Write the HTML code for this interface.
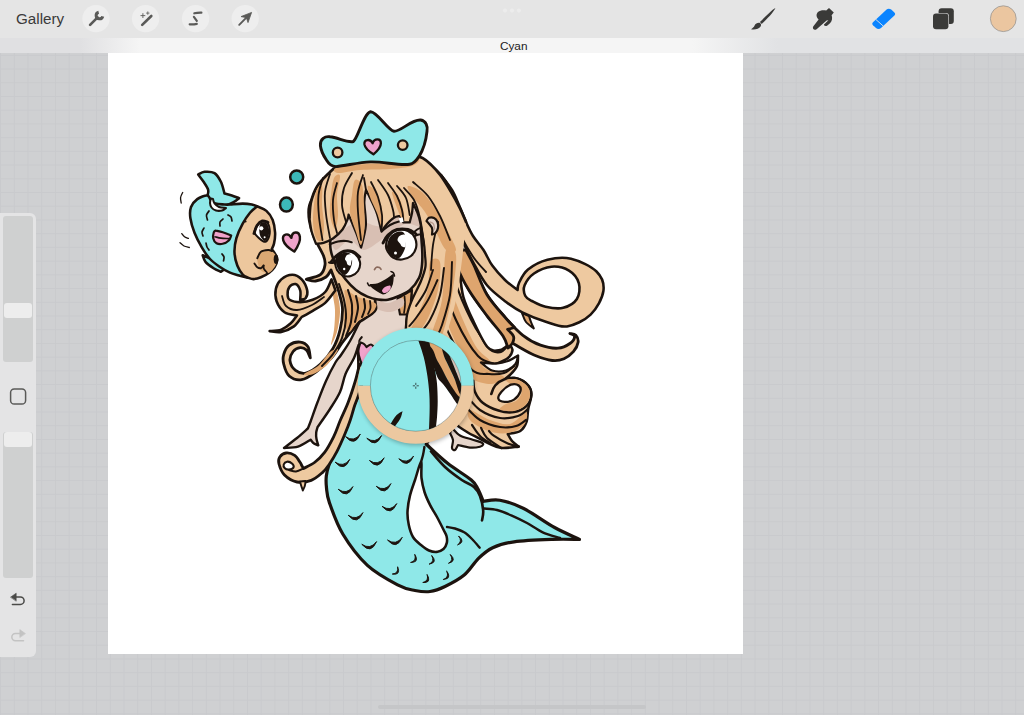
<!DOCTYPE html>
<html lang="en">
<head>
<meta charset="utf-8">
<title>Procreate – Cyan</title>
<style>
html,body{margin:0;padding:0;}
body{width:1024px;height:715px;overflow:hidden;position:relative;background:#cfd0d2;font-family:"Liberation Sans",sans-serif;}
#grid{position:absolute;left:0;top:0;width:1024px;height:715px;
 background-image:linear-gradient(to right,#c9cacd 1.1px,transparent 1.1px),linear-gradient(to bottom,#c9cacd 1.1px,transparent 1.1px);
 background-size:13.722px 13.733px;background-position:0.06px -0.05px;}
#topbar{position:absolute;left:0;top:0;width:1024px;height:38px;background:#e5e5e5;}
#strip{position:absolute;left:0;top:38px;width:1024px;height:15px;
 background:linear-gradient(to right,#e0e0e2 0,#e0e0e2 80px,#f5f5f5 140px,#f5f5f5 692px,#e1e2e4 778px,#e1e2e4 1024px);}
#title{position:absolute;left:1.7px;top:38.7px;width:1024px;height:15px;line-height:15px;text-align:center;font-size:11.8px;color:#222;}
#gallery{position:absolute;left:16px;top:9px;font-size:15.2px;line-height:20px;color:#3a3a3a;}
#canvas{position:absolute;left:108.2px;top:52.8px;width:634.4px;height:601.4px;background:#fff;}
#sidebar{position:absolute;left:-8px;top:212.5px;width:44px;height:444.5px;background:#e4e4e5;border-radius:6px;}
.slider{position:absolute;left:3px;width:29.7px;background:#cfd0d0;border-radius:3px;}
.knob{position:absolute;left:3.6px;width:28.6px;height:14.5px;background:#ededed;border-radius:3px;}
#art{position:absolute;left:0;top:0;}
#icons{position:absolute;left:0;top:0;}
#homebar{position:absolute;left:378px;top:705px;width:268px;height:4px;border-radius:2px;background:#c5c6c8;}
</style>
</head>
<body>
<div id="grid"></div>
<div id="canvas"></div>
<svg id="art" width="1024" height="715" viewBox="0 0 1024 715">
<g id="hair-back">
<path d="M419.0 157.0 C422.7 160.0 435.0 167.8 441.0 175.0 C447.0 182.2 451.5 189.2 455.0 200.0 C458.5 210.8 461.2 227.8 462.0 240.0 C462.8 252.2 460.3 267.9 460.0 273.5 C460.6 277.4 461.3 289.2 463.5 297.0 C465.7 304.8 469.0 311.7 473.0 320.0 C477.0 328.3 483.1 341.7 487.6 347.0 C492.1 352.3 496.4 352.5 500.0 352.0 C503.6 351.5 507.5 345.3 509.0 344.0 C509.6 345.0 512.7 347.7 512.5 350.0 C512.3 352.3 510.8 355.7 508.0 358.0 C505.2 360.3 498.0 363.0 496.0 364.0 C498.0 363.7 504.3 363.3 508.0 362.0 C511.7 360.7 516.3 357.0 518.0 356.0 C517.8 357.7 518.3 362.8 517.0 366.0 C515.7 369.2 512.1 372.8 510.0 375.0 C507.9 377.2 505.5 378.5 504.6 379.2 C506.7 379.1 513.3 377.3 517.2 378.4 C521.1 379.4 525.9 382.7 528.2 385.5 C530.6 388.3 531.3 391.1 531.3 395.0 C531.3 398.9 529.0 404.6 528.2 409.0 C527.4 413.4 527.9 417.8 526.6 421.5 C525.3 425.2 523.4 428.9 520.3 431.0 C517.2 433.1 509.9 433.5 507.8 434.0 C508.5 435.2 510.2 438.9 512.0 441.0 C513.8 443.1 517.6 445.7 518.7 446.6 C515.8 446.8 506.4 448.5 501.5 448.0 C496.6 447.5 492.9 445.2 489.0 443.5 C485.1 441.8 481.7 439.7 478.0 437.8 C474.3 435.9 470.8 434.5 467.0 432.0 C463.2 429.5 458.7 427.5 455.0 423.0 C451.3 418.5 449.2 415.5 445.0 405.0 C440.8 394.5 435.0 374.2 430.0 360.0 C425.0 345.8 418.3 333.3 415.0 320.0 C411.7 306.7 411.7 296.7 410.0 280.0 C408.3 263.3 406.7 236.7 405.0 220.0 C403.3 203.3 400.8 186.7 400.0 180.0Z" fill="#eec9a0" stroke="#1c130e" stroke-width="2.56" stroke-linejoin="round" stroke-linecap="round" />
<path d="M428.0 205.0 C430.0 205.8 435.5 234.2 440.0 250.0 C444.5 265.8 449.2 284.2 455.0 300.0 C460.8 315.8 469.2 334.7 475.0 345.0 C480.8 355.3 490.8 358.7 490.0 362.0 C489.2 365.3 476.7 370.3 470.0 365.0 C463.3 359.7 455.7 342.5 450.0 330.0 C444.3 317.5 439.7 304.2 436.0 290.0 C432.3 275.8 429.3 259.2 428.0 245.0 C426.7 230.8 426.0 204.2 428.0 205.0Z" fill="#dea56e" stroke="none" stroke-width="2.56" stroke-linejoin="round" stroke-linecap="round" />
<path d="M471.0 360.0 C474.7 360.0 482.4 367.1 488.0 370.0 C493.6 372.9 503.9 375.3 504.6 377.6 C505.3 379.9 497.1 383.6 492.0 384.0 C486.9 384.4 478.3 382.3 474.0 380.0 C469.7 377.7 466.5 373.3 466.0 370.0 C465.5 366.7 467.3 360.0 471.0 360.0Z" fill="#dea56e" stroke="none" stroke-width="2.56" stroke-linejoin="round" stroke-linecap="round" />
<path d="M470.0 410.0 C473.3 410.0 483.3 417.7 490.0 420.0 C496.7 422.3 504.0 425.3 510.0 424.0 C516.0 422.7 523.7 411.8 526.0 412.0 C528.3 412.2 527.0 421.5 524.0 425.0 C521.0 428.5 514.0 432.0 508.0 433.0 C502.0 434.0 494.3 433.2 488.0 431.0 C481.7 428.8 473.0 423.5 470.0 420.0 C467.0 416.5 466.7 410.0 470.0 410.0Z" fill="#dea56e" stroke="none" stroke-width="2.56" stroke-linejoin="round" stroke-linecap="round" />
<path d="M438.0 215.0 C439.7 222.5 444.0 245.8 448.0 260.0 C452.0 274.2 456.7 287.5 462.0 300.0 C467.3 312.5 474.2 326.3 480.0 335.0 C485.8 343.7 494.2 349.2 497.0 352.0" fill="none" stroke="#1c130e" stroke-width="2.16" stroke-linejoin="round" stroke-linecap="round" />
<path d="M430.0 225.0 C431.7 233.3 435.7 259.2 440.0 275.0 C444.3 290.8 449.7 306.5 456.0 320.0 C462.3 333.5 471.3 348.7 478.0 356.0 C484.7 363.3 493.0 362.7 496.0 364.0" fill="none" stroke="#1c130e" stroke-width="2.16" stroke-linejoin="round" stroke-linecap="round" />
<path d="M426.0 250.0 C427.7 258.3 431.7 285.0 436.0 300.0 C440.3 315.0 446.0 328.3 452.0 340.0 C458.0 351.7 465.8 364.3 472.0 370.0 C478.2 375.7 483.7 373.5 489.0 374.0 C494.3 374.5 499.8 374.3 504.0 373.0 C508.2 371.7 512.3 367.2 514.0 366.0" fill="none" stroke="#1c130e" stroke-width="2.16" stroke-linejoin="round" stroke-linecap="round" />
<path d="M446.0 190.0 C447.7 195.8 453.5 213.3 456.0 225.0 C458.5 236.7 460.2 254.2 461.0 260.0" fill="none" stroke="#1c130e" stroke-width="2.16" stroke-linejoin="round" stroke-linecap="round" />
<path d="M473.3 380.8 C473.6 382.6 473.3 388.1 474.9 391.7 C476.5 395.3 478.8 399.6 482.7 402.7 C486.6 405.8 493.2 408.9 498.4 410.5 C503.6 412.1 509.3 412.8 514.0 412.0 C518.7 411.2 523.7 408.6 526.6 405.8 C529.5 403.0 531.0 398.4 531.3 395.0 C531.6 391.6 530.6 388.3 528.2 385.5 C525.9 382.7 521.1 379.4 517.2 378.4 C513.3 377.3 508.3 378.0 504.6 379.2 C500.9 380.4 497.4 383.0 495.2 385.5 C493.0 388.0 491.9 392.6 491.3 394.0" fill="#eec9a0" stroke="#1c130e" stroke-width="2.56" stroke-linejoin="round" stroke-linecap="round" />
<path d="M506.0 380.0 C507.0 379.2 513.7 378.4 517.2 379.4 C520.7 380.4 524.9 383.4 527.0 386.0 C529.1 388.6 530.2 391.8 530.0 395.0 C529.8 398.2 528.3 402.3 525.6 405.0 C522.9 407.7 518.3 410.2 514.0 411.0 C509.7 411.8 501.3 410.7 500.0 409.5 C498.7 408.3 503.3 405.4 506.0 404.0 C508.7 402.6 513.4 402.8 516.0 401.0 C518.6 399.2 521.0 395.6 521.5 393.0 C522.0 390.4 520.8 387.0 519.0 385.5 C517.2 384.0 513.2 384.9 511.0 384.0 C508.8 383.1 505.0 380.8 506.0 380.0Z" fill="#dea56e" stroke="none" stroke-width="2.56" stroke-linejoin="round" stroke-linecap="round" />
<path d="M498.4 398.8 C497.9 397.1 499.4 394.1 501.5 391.7 C503.6 389.3 508.0 385.7 510.9 384.7 C513.8 383.7 517.1 384.3 518.7 385.5 C520.3 386.7 521.1 389.3 520.3 391.7 C519.5 394.1 516.6 397.9 514.0 399.6 C511.4 401.3 507.2 402.0 504.6 401.9 C502.0 401.8 498.9 400.5 498.4 398.8Z" fill="#fff" stroke="#1c130e" stroke-width="2.3" stroke-linejoin="round" stroke-linecap="round" />
<path d="M466.0 395.0 C468.3 397.5 474.3 406.2 480.0 410.0 C485.7 413.8 493.7 417.0 500.0 418.0 C506.3 419.0 513.3 417.5 518.0 416.0 C522.7 414.5 526.3 410.2 528.0 409.0" fill="none" stroke="#1c130e" stroke-width="2.16" stroke-linejoin="round" stroke-linecap="round" />
<path d="M464.0 405.0 C466.7 407.5 474.0 416.3 480.0 420.0 C486.0 423.7 494.0 426.0 500.0 427.0 C506.0 428.0 511.7 427.2 516.0 426.0 C520.3 424.8 524.3 421.0 526.0 420.0" fill="none" stroke="#1c130e" stroke-width="2.16" stroke-linejoin="round" stroke-linecap="round" />
<path d="M472.0 425.0 C473.3 426.8 477.0 433.0 480.0 436.0 C483.0 439.0 488.3 441.8 490.0 443.0" fill="none" stroke="#1c130e" stroke-width="2.16" stroke-linejoin="round" stroke-linecap="round" />
<path d="M481.0 427.8 C482.0 429.5 483.6 434.6 487.0 438.0 C490.4 441.4 499.1 446.3 501.5 448.0" fill="none" stroke="#1c130e" stroke-width="2.16" stroke-linejoin="round" stroke-linecap="round" />
<path d="M489.0 431.0 C489.8 431.8 490.6 433.5 493.7 435.6 C496.8 437.7 503.6 441.6 507.8 443.4 C512.0 445.2 516.9 446.1 518.7 446.6" fill="none" stroke="#1c130e" stroke-width="2.16" stroke-linejoin="round" stroke-linecap="round" />
<path d="M481.0 362.5 C483.5 362.7 491.5 363.8 496.0 363.5 C500.5 363.2 504.3 362.3 508.0 361.0 C511.7 359.7 516.3 356.4 518.0 355.5 C517.6 356.9 517.5 361.5 515.5 364.0 C513.5 366.5 509.9 369.4 506.0 370.5 C502.1 371.6 496.2 371.8 492.0 370.5 C487.8 369.2 482.8 363.8 481.0 362.5Z" fill="#fff" stroke="#1c130e" stroke-width="2.3" stroke-linejoin="round" stroke-linecap="round" />
<path d="M460.0 273.5 C460.6 277.4 461.3 289.2 463.5 297.0 C465.7 304.8 469.0 311.7 473.0 320.0 C477.0 328.3 483.1 342.0 487.6 347.0 C492.1 352.0 496.4 350.5 500.0 350.0 C503.6 349.5 507.5 345.0 509.0 344.0 C508.3 342.7 508.7 340.7 505.0 336.0 C501.3 331.3 492.9 323.3 487.0 315.8 C481.1 308.3 473.9 298.1 469.4 291.0 C464.9 283.9 461.6 276.4 460.0 273.5Z" fill="#fff" stroke="#1c130e" stroke-width="2.3" stroke-linejoin="round" stroke-linecap="round" />
<path d="M470.0 262.0 C472.8 267.4 481.1 285.4 487.0 294.7 C492.9 304.0 499.3 310.8 505.3 317.6 C511.3 324.4 517.0 330.7 522.9 335.3 C528.8 339.9 534.6 343.1 540.5 345.2 C546.4 347.3 553.1 348.5 558.0 348.2 C562.9 347.9 567.1 345.5 569.9 343.5 C572.7 341.5 574.6 338.1 574.6 336.4 C574.6 334.7 570.7 334.0 569.9 333.5 C570.9 333.8 574.4 333.8 575.8 335.3 C577.2 336.8 578.5 339.6 578.1 342.3 C577.7 345.0 575.8 348.9 573.4 351.7 C571.0 354.4 567.5 357.3 564.0 358.8 C560.5 360.3 557.2 361.1 552.3 360.5 C547.4 359.9 540.5 357.6 534.6 355.2 C528.7 352.8 521.4 348.3 517.0 345.8 C512.6 343.3 509.5 341.0 508.0 340.0 C505.0 335.8 496.3 324.2 490.0 315.0 C483.7 305.8 473.3 290.0 470.0 285.0Z" fill="#eec9a0" stroke="#1c130e" stroke-width="2.82" stroke-linejoin="round" stroke-linecap="round" />
<path d="M455.3 250.0 C455.7 252.9 455.2 260.8 457.6 267.6 C460.0 274.4 464.5 283.0 469.4 291.0 C474.3 299.0 481.4 308.3 487.0 315.8 C492.6 323.3 499.5 330.6 503.0 336.0 C506.5 341.4 507.2 346.0 508.0 348.0 C508.8 347.2 511.6 344.9 512.5 343.0 C513.4 341.1 514.3 338.7 513.5 336.4 C512.7 334.1 508.6 330.6 507.6 329.4 C508.8 329.1 513.4 327.8 514.5 327.5 C513.0 325.9 509.9 323.1 505.3 317.6 C500.7 312.1 492.2 303.4 487.0 294.7 C481.8 286.0 477.5 272.8 474.0 265.3 C470.5 257.9 467.2 252.6 465.9 250.0Z" fill="#dea56e" stroke="#1c130e" stroke-width="2.82" stroke-linejoin="round" stroke-linecap="round" />
<path d="M522.0 313.0 C522.7 314.5 524.0 319.4 526.0 322.0 C528.0 324.6 532.5 327.3 533.8 328.4 C533.3 327.3 531.8 324.1 531.0 322.0 C530.2 319.9 529.3 317.0 529.0 316.0Z" fill="#dea56e" stroke="#1c130e" stroke-width="2.05" stroke-linejoin="round" stroke-linecap="round" />
<path d="M441.0 175.0 C442.8 177.5 449.0 185.0 452.0 190.0 C455.0 195.0 456.7 199.7 459.0 205.0 C461.3 210.3 463.7 216.8 466.0 222.0 C468.3 227.2 470.1 231.3 473.0 236.0 C475.9 240.7 480.3 245.1 483.5 250.0 C486.7 254.9 488.7 260.6 492.3 265.6 C495.9 270.6 500.8 275.9 505.0 280.0 C509.2 284.1 515.5 288.3 517.6 290.0 C517.8 288.8 517.3 286.4 519.0 283.0 C520.7 279.6 523.2 273.5 528.0 269.6 C532.8 265.7 540.3 261.6 547.5 259.8 C554.7 258.0 562.8 256.9 571.0 258.8 C579.2 260.8 591.1 266.1 596.5 271.5 C601.9 276.9 604.4 283.8 603.4 291.0 C602.4 298.2 596.7 308.7 590.6 314.6 C584.5 320.5 574.5 325.2 567.0 326.4 C559.5 327.6 553.2 324.0 545.8 321.7 C538.3 319.4 529.0 315.6 522.3 312.3 C515.6 309.0 511.7 306.2 505.8 301.7 C499.9 297.2 492.5 291.9 487.0 285.3 C481.5 278.7 477.1 269.4 472.9 261.8 C468.7 254.2 465.8 247.8 462.0 240.0 C458.2 232.2 452.0 219.2 450.0 215.0Z" fill="#eec9a0" stroke="#1c130e" stroke-width="2.56" stroke-linejoin="round" stroke-linecap="round" />
<path d="M525.2 295.8 C524.0 293.2 523.1 289.0 524.6 285.3 C526.1 281.6 529.5 276.6 534.0 273.5 C538.5 270.4 545.6 267.2 551.4 266.7 C557.2 266.2 564.4 267.8 569.0 270.6 C573.6 273.4 577.6 278.6 578.9 283.3 C580.2 288.0 579.5 294.9 576.9 299.0 C574.3 303.1 568.4 306.5 563.2 307.8 C558.0 309.1 550.8 307.9 545.6 306.8 C540.4 305.7 535.4 302.8 532.0 301.0 C528.6 299.2 526.4 298.4 525.2 295.8Z" fill="#fff" stroke="#1c130e" stroke-width="2.56" stroke-linejoin="round" stroke-linecap="round" />
<path d="M444.0 195.0 C445.3 198.3 449.0 207.8 452.0 215.0 C455.0 222.2 458.3 230.8 462.0 238.0 C465.7 245.2 470.0 252.3 474.0 258.0 C478.0 263.7 484.0 269.7 486.0 272.0" fill="none" stroke="#1c130e" stroke-width="1.92" stroke-linejoin="round" stroke-linecap="round" />
</g>
<g id="tail">
<path d="M364.0 374.0 C363.3 376.7 362.0 384.0 360.0 390.0 C358.0 396.0 354.5 403.7 352.0 410.0 C349.5 416.3 347.7 421.7 345.0 428.0 C342.3 434.3 338.7 441.9 336.0 448.0 C333.3 454.1 330.6 460.0 329.0 464.7 C327.4 469.4 326.7 472.1 326.3 476.0 C325.9 479.9 326.0 483.6 326.5 488.0 C327.0 492.4 326.7 494.9 329.4 502.6 C332.1 510.3 336.5 523.5 342.8 534.0 C349.1 544.5 358.1 556.7 367.4 565.3 C376.7 573.9 390.8 581.2 398.7 585.4 C406.6 589.6 409.8 589.5 415.0 590.5 C420.2 591.5 425.0 592.2 430.0 591.5 C435.0 590.8 439.3 589.2 445.0 586.5 C450.7 583.8 458.6 579.8 464.2 575.1 C469.8 570.4 473.8 563.0 478.5 558.4 C483.2 553.8 486.8 550.5 492.7 547.7 C498.6 544.9 504.2 543.2 514.1 541.8 C524.0 540.4 541.3 539.8 552.2 539.4 C563.1 539.0 575.0 539.4 579.5 539.4 C575.4 537.4 563.9 532.6 554.6 527.5 C545.3 522.4 532.8 513.0 523.7 508.5 C514.6 503.9 506.6 501.4 499.9 500.2 C493.1 499.0 486.0 501.1 483.2 501.3 C482.3 499.2 480.0 492.6 478.0 489.0 C476.0 485.4 476.4 484.3 471.3 480.0 C466.2 475.7 455.1 469.2 447.6 463.3 C440.1 457.4 429.8 447.5 426.2 444.3 C428.5 440.2 436.7 428.2 440.0 420.0 C443.3 411.8 446.0 402.7 446.0 395.0 C446.0 387.3 441.0 377.5 440.0 374.0Z" fill="#8fe8e8" stroke="#1c130e" stroke-width="3.2" stroke-linejoin="round" stroke-linecap="round" />
<path d="M421.0 462.0 C419.9 462.3 416.9 474.4 415.0 480.0 C413.1 485.6 411.1 490.6 409.9 495.9 C408.6 501.2 407.7 507.1 407.5 512.0 C407.3 516.9 407.9 520.8 408.8 525.0 C409.7 529.2 411.0 533.7 413.0 537.0 C415.0 540.3 418.3 542.8 421.0 545.0 C423.7 547.2 426.4 549.4 429.0 550.5 C431.6 551.6 434.3 552.1 436.7 551.9 C439.1 551.6 441.8 550.5 443.5 549.0 C445.2 547.5 446.3 545.1 446.8 542.9 C447.3 540.7 447.1 538.2 446.5 536.0 C445.9 533.8 445.0 532.7 443.4 529.5 C441.8 526.3 439.2 521.1 437.0 517.0 C434.8 512.9 432.1 509.1 430.0 504.9 C427.9 500.7 425.9 496.5 424.5 492.0 C423.1 487.5 422.1 483.0 421.5 478.0 C420.9 473.0 422.1 461.7 421.0 462.0Z" fill="#fff" stroke="#1c130e" stroke-width="2.56" stroke-linejoin="round" stroke-linecap="round" />
<path d="M424.4 447.0 C424.2 448.3 423.6 452.5 423.0 455.0 C422.4 457.5 421.3 460.8 421.0 462.0" fill="none" stroke="#1c130e" stroke-width="2.4" stroke-linejoin="round" stroke-linecap="round" />
<path d="M431.0 451.4 C433.3 454.0 439.9 462.2 445.0 467.0 C450.1 471.8 457.0 476.7 461.8 480.0 C466.6 483.3 471.0 484.3 474.0 487.0 C477.0 489.7 478.5 492.0 480.0 496.0 C481.5 500.0 482.9 506.8 483.2 510.9 C483.5 515.0 482.2 518.8 482.0 520.4" fill="none" stroke="#1c130e" stroke-width="2.64" stroke-linejoin="round" stroke-linecap="round" />
<path d="M484.0 508.5 C486.2 508.8 492.4 508.8 497.0 510.0 C501.6 511.2 506.8 513.4 511.8 515.6 C516.8 517.8 521.9 520.2 527.0 523.0 C532.1 525.8 537.2 529.8 542.7 532.3 C548.2 534.8 557.1 537.0 560.0 538.0" fill="none" stroke="#1c130e" stroke-width="2.4" stroke-linejoin="round" stroke-linecap="round" />
<path d="M447.0 527.0 C448.3 527.2 452.1 527.6 455.0 528.5 C457.9 529.4 461.4 530.5 464.2 532.3 C467.0 534.0 469.4 536.4 472.0 539.0 C474.6 541.6 478.4 546.2 479.7 547.7" fill="none" stroke="#1c130e" stroke-width="2.4" stroke-linejoin="round" stroke-linecap="round" />
<path d="M345.9 435.6 Q353.4 447.3 360.9 435.0 Q353.4 442.6 345.9 435.6 Z" transform="rotate(-8 353.4 438.2)" fill="#1c130e" stroke="#1c130e" stroke-width="0.9" stroke-linejoin="round"/>
<path d="M367.1 437.2 Q374.6 448.9 382.1 436.6 Q374.6 444.2 367.1 437.2 Z" transform="rotate(-8 374.6 439.8)" fill="#1c130e" stroke="#1c130e" stroke-width="0.9" stroke-linejoin="round"/>
<path d="M335.3 461.0 Q342.8 472.7 350.3 460.4 Q342.8 468.0 335.3 461.0 Z" transform="rotate(-8 342.8 463.6)" fill="#1c130e" stroke="#1c130e" stroke-width="0.9" stroke-linejoin="round"/>
<path d="M369.7 459.4 Q377.2 471.1 384.7 458.8 Q377.2 466.4 369.7 459.4 Z" transform="rotate(-8 377.2 462.0)" fill="#1c130e" stroke="#1c130e" stroke-width="0.9" stroke-linejoin="round"/>
<path d="M399.1 457.7 Q406.6 469.4 414.1 457.1 Q406.6 464.7 399.1 457.7 Z" transform="rotate(-8 406.6 460.3)" fill="#1c130e" stroke="#1c130e" stroke-width="0.9" stroke-linejoin="round"/>
<path d="M338.5 488.2 Q346.0 499.9 353.5 487.6 Q346.0 495.2 338.5 488.2 Z" transform="rotate(-8 346.0 490.8)" fill="#1c130e" stroke="#1c130e" stroke-width="0.9" stroke-linejoin="round"/>
<path d="M376.5 485.2 Q384.0 496.9 391.5 484.6 Q384.0 492.2 376.5 485.2 Z" transform="rotate(-8 384.0 487.8)" fill="#1c130e" stroke="#1c130e" stroke-width="0.9" stroke-linejoin="round"/>
<path d="M382.3 505.2 Q389.8 516.9 397.3 504.6 Q389.8 512.2 382.3 505.2 Z" transform="rotate(-8 389.8 507.8)" fill="#1c130e" stroke="#1c130e" stroke-width="0.9" stroke-linejoin="round"/>
<path d="M348.5 514.2 Q356.0 525.9 363.5 513.6 Q356.0 521.2 348.5 514.2 Z" transform="rotate(-8 356.0 516.8)" fill="#1c130e" stroke="#1c130e" stroke-width="0.9" stroke-linejoin="round"/>
<path d="M362.1 543.2 Q369.6 554.9 377.1 542.6 Q369.6 550.2 362.1 543.2 Z" transform="rotate(-8 369.6 545.8)" fill="#1c130e" stroke="#1c130e" stroke-width="0.9" stroke-linejoin="round"/>
<path d="M387.8 538.9 Q395.3 550.6 402.8 538.3 Q395.3 545.9 387.8 538.9 Z" transform="rotate(-8 395.3 541.5)" fill="#1c130e" stroke="#1c130e" stroke-width="0.9" stroke-linejoin="round"/>
<path d="M392.0 570.0 Q396.5 577.6 401.0 569.4 Q396.5 574.6 392.0 570.0 Z" transform="rotate(-50 396.5 571.7)" fill="#1c130e" stroke="#1c130e" stroke-width="0.9" stroke-linejoin="round"/>
<path d="M409.9 557.7 Q414.4 565.4 418.9 557.1 Q414.4 562.3 409.9 557.7 Z" transform="rotate(-60 414.4 559.4)" fill="#1c130e" stroke="#1c130e" stroke-width="0.9" stroke-linejoin="round"/>
<path d="M427.8 558.8 Q432.3 566.5 436.8 558.2 Q432.3 563.4 427.8 558.8 Z" transform="rotate(-70 432.3 560.5)" fill="#1c130e" stroke="#1c130e" stroke-width="0.9" stroke-linejoin="round"/>
<path d="M422.2 577.8 Q426.7 585.5 431.2 577.2 Q426.7 582.4 422.2 577.8 Z" transform="rotate(-60 426.7 579.5)" fill="#1c130e" stroke="#1c130e" stroke-width="0.9" stroke-linejoin="round"/>
<path d="M446.8 557.7 Q451.3 565.4 455.8 557.1 Q451.3 562.3 446.8 557.7 Z" transform="rotate(-75 451.3 559.4)" fill="#1c130e" stroke="#1c130e" stroke-width="0.9" stroke-linejoin="round"/>
<path d="M442.3 574.4 Q446.8 582.0 451.3 573.8 Q446.8 579.0 442.3 574.4 Z" transform="rotate(-65 446.8 576.1)" fill="#1c130e" stroke="#1c130e" stroke-width="0.9" stroke-linejoin="round"/>
<path d="M455.5 539.1 Q460.0 546.8 464.5 538.5 Q460.0 543.7 455.5 539.1 Z" transform="rotate(-80 460.0 540.8)" fill="#1c130e" stroke="#1c130e" stroke-width="0.9" stroke-linejoin="round"/>
</g>
<g id="body">
<path d="M452.0 428.0 C453.3 429.2 456.7 433.6 460.0 435.5 C463.3 437.4 468.5 438.4 472.0 439.5 C475.5 440.6 479.1 441.4 481.0 442.3 C482.9 443.2 483.4 443.9 483.2 444.6 C483.0 445.4 482.2 446.3 480.0 446.8 C477.8 447.3 473.7 447.9 470.0 447.6 C466.3 447.3 460.0 445.4 458.0 445.0 C457.5 445.8 456.0 449.5 455.0 450.0 C454.0 450.5 452.3 449.7 452.0 448.0 C451.7 446.3 453.3 442.5 453.0 440.0 C452.7 437.5 450.5 434.2 450.0 433.0Z" fill="#e6d5cb" stroke="#1c130e" stroke-width="2.18" stroke-linejoin="round" stroke-linecap="round" />
<path d="M374.0 296.0 C373.8 297.5 374.3 302.0 373.0 305.0 C371.7 308.0 368.2 311.2 366.0 314.0 C363.8 316.8 360.8 320.4 359.7 321.7 C359.2 323.9 356.9 330.3 356.5 335.0 C356.1 339.7 357.2 344.5 357.5 350.0 C357.8 355.5 358.1 362.5 358.0 368.0 C357.9 373.5 357.2 380.5 357.0 383.0 C364.2 383.3 386.8 385.5 400.0 385.0 C413.2 384.5 430.0 387.5 436.0 380.0 C442.0 372.5 436.0 346.7 436.0 340.0 C433.3 337.0 424.5 326.5 420.0 322.0 C415.5 317.5 411.6 315.9 408.8 313.0 C406.0 310.1 404.1 307.6 403.0 304.4 C401.9 301.2 402.2 295.7 402.0 294.0Z" fill="#e6d5cb" stroke="none" stroke-width="2.56" stroke-linejoin="round" stroke-linecap="round" />
<path d="M361.7 337.2 C361.2 338.0 359.1 339.9 358.5 342.0 C357.9 344.1 357.9 345.7 357.8 350.0 C357.8 354.3 358.3 362.5 358.2 368.0 C358.1 373.5 357.2 380.5 357.0 383.0" fill="none" stroke="#1c130e" stroke-width="2.16" stroke-linejoin="round" stroke-linecap="round" />
<path d="M407.5 314.5 C407.3 315.8 406.6 319.2 406.3 322.0 C406.0 324.8 405.9 329.5 405.8 331.0" fill="none" stroke="#1c130e" stroke-width="2.16" stroke-linejoin="round" stroke-linecap="round" />
<path d="M397.6 298.8 C398.7 298.1 401.6 296.2 404.0 294.7 C406.4 293.2 410.7 290.8 412.0 290.0 C411.8 291.7 411.2 297.2 411.0 300.0 C410.8 302.8 411.0 304.6 410.5 307.0 C410.0 309.4 408.6 313.2 408.2 314.5 C406.8 314.5 401.4 314.5 400.0 314.5 C399.8 313.1 398.9 308.6 398.5 306.0 C398.1 303.4 397.8 300.0 397.6 298.8Z" fill="#dea56e" stroke="#1c130e" stroke-width="2.18" stroke-linejoin="round" stroke-linecap="round" />
<path d="M404.5 296.0 C404.6 297.5 405.1 302.2 405.0 305.0 C404.9 307.8 404.2 311.7 404.0 313.0" fill="none" stroke="#1c130e" stroke-width="1.68" stroke-linejoin="round" stroke-linecap="round" />
<path d="M375.0 299.0 C377.0 298.2 383.5 303.2 388.0 303.0 C392.5 302.8 399.5 297.5 402.0 298.0 C404.5 298.5 405.0 303.7 403.0 306.0 C401.0 308.3 394.5 311.7 390.0 312.0 C385.5 312.3 378.5 310.2 376.0 308.0 C373.5 305.8 373.0 299.8 375.0 299.0Z" fill="#d8bfb3" stroke="none" stroke-width="2.56" stroke-linejoin="round" stroke-linecap="round" />
<path d="M360.5 342.5 C360.1 343.9 358.3 347.9 358.3 351.0 C358.3 354.1 359.4 358.0 360.5 361.0 C361.6 364.0 364.2 367.7 365.0 369.0 C366.5 367.8 370.8 364.8 374.0 362.0 C377.2 359.2 382.3 353.7 384.0 352.0 C383.3 350.9 381.6 346.2 380.0 345.5 C378.4 344.8 375.4 347.2 374.5 347.5 C373.9 347.0 372.3 344.6 371.0 344.5 C369.7 344.4 367.2 346.6 366.5 347.0 C366.1 346.5 365.0 344.8 364.0 344.0 C363.0 343.2 361.1 342.8 360.5 342.5Z" fill="#f1a3cb" stroke="#1c130e" stroke-width="2.18" stroke-linejoin="round" stroke-linecap="round" />
<path d="M359.7 321.7 C358.1 324.8 353.4 334.9 350.3 340.5 C347.2 346.1 343.4 351.4 341.0 355.0 C338.6 358.6 338.2 357.7 335.7 362.0 C333.2 366.3 329.0 374.3 326.0 381.0 C323.0 387.7 320.2 395.2 317.6 402.0 C315.0 408.8 312.2 417.1 310.6 421.5 C309.0 425.9 308.3 427.3 307.8 428.5 C306.0 430.1 301.0 434.8 297.0 438.0 C293.0 441.2 286.2 446.3 284.0 448.0 C286.3 447.8 293.6 448.1 298.0 446.7 C302.4 445.3 308.5 440.9 310.6 439.7 C311.2 440.3 312.7 442.6 314.0 443.5 C315.3 444.4 317.6 445.0 318.3 445.3 C318.0 444.2 316.9 441.1 316.5 439.0 C316.1 436.9 316.0 434.7 316.2 432.7 C316.4 430.7 317.4 427.9 317.6 427.0 C319.7 424.0 326.3 414.8 330.0 409.0 C333.7 403.2 337.4 397.8 340.0 392.0 C342.6 386.2 343.2 379.7 345.5 374.0 C347.8 368.3 351.9 362.7 354.0 358.0 C356.1 353.3 357.3 348.0 358.0 346.0Z" fill="#e6d5cb" stroke="none" stroke-width="2.56" stroke-linejoin="round" stroke-linecap="round" />
<path d="M359.7 321.7 C358.1 324.8 353.4 334.9 350.3 340.5 C347.2 346.1 343.4 351.4 341.0 355.0 C338.6 358.6 338.2 357.7 335.7 362.0 C333.2 366.3 329.0 374.3 326.0 381.0 C323.0 387.7 320.2 395.2 317.6 402.0 C315.0 408.8 312.2 417.1 310.6 421.5 C309.0 425.9 308.3 427.3 307.8 428.5 C306.0 430.1 301.0 434.8 297.0 438.0 C293.0 441.2 286.2 446.3 284.0 448.0 C286.3 447.8 293.6 448.1 298.0 446.7 C302.4 445.3 308.5 440.9 310.6 439.7 C311.2 440.3 312.7 442.6 314.0 443.5 C315.3 444.4 317.6 445.0 318.3 445.3 C318.0 444.2 316.9 441.1 316.5 439.0 C316.1 436.9 316.0 434.7 316.2 432.7 C316.4 430.7 317.4 427.9 317.6 427.0 C319.7 424.0 326.3 414.8 330.0 409.0 C333.7 403.2 337.4 397.8 340.0 392.0 C342.6 386.2 343.2 379.7 345.5 374.0 C347.8 368.3 351.8 362.8 354.0 358.0 C356.2 353.2 357.8 347.2 358.5 345.0" fill="none" stroke="#1c130e" stroke-width="2.4" stroke-linejoin="round" stroke-linecap="round" />
</g>
<g id="hair-left">
<path d="M359.5 364.0 C358.8 366.8 357.2 374.7 355.3 381.0 C353.4 387.3 350.9 395.3 348.3 402.0 C345.8 408.7 342.4 415.2 340.0 421.0 C337.6 426.8 336.2 431.6 333.6 436.8 C331.0 442.0 327.8 448.1 324.6 452.4 C321.4 456.7 318.0 459.8 314.5 462.5 C311.0 465.2 305.2 467.5 303.4 468.5 C303.1 467.9 302.0 466.0 301.5 465.0 C301.0 464.0 301.3 464.1 300.2 462.5 C299.1 460.9 297.1 457.0 294.7 455.4 C292.3 453.8 288.5 452.7 286.0 453.0 C283.5 453.3 281.0 455.2 279.8 457.0 C278.6 458.8 278.2 461.0 279.0 464.0 C279.8 467.0 281.5 472.0 284.5 475.0 C287.5 478.0 292.6 481.1 297.0 482.0 C301.4 482.9 307.0 482.0 311.2 480.4 C315.4 478.8 319.4 475.2 322.4 472.6 C325.4 470.0 326.6 468.2 329.0 464.7 C331.4 461.1 334.4 456.3 337.0 451.3 C339.6 446.3 342.5 439.7 344.7 434.5 C346.9 429.3 348.7 424.8 350.3 420.0 C351.9 415.2 353.0 410.7 354.5 406.0 C356.0 401.3 358.2 397.3 359.5 392.0 C360.8 386.7 361.8 378.3 362.3 374.0 C362.8 369.7 362.5 367.3 362.5 366.0Z" fill="#eec9a0" stroke="#1c130e" stroke-width="2.82" stroke-linejoin="round" stroke-linecap="round" />
<path d="M283.7 464.5 C284.1 463.4 285.6 461.9 287.0 461.7 C288.4 461.5 290.9 462.5 292.0 463.5 C293.1 464.5 294.0 466.5 293.5 467.5 C293.0 468.5 290.4 469.5 289.0 469.6 C287.6 469.7 285.7 469.2 284.8 468.3 C283.9 467.4 283.3 465.6 283.7 464.5Z" fill="#fff" stroke="#1c130e" stroke-width="2.05" stroke-linejoin="round" stroke-linecap="round" />
<path d="M303.4 468.5 C302.2 469.0 298.4 471.2 296.0 471.5 C293.6 471.8 290.2 470.2 289.0 470.0" fill="none" stroke="#1c130e" stroke-width="1.92" stroke-linejoin="round" stroke-linecap="round" />
<path d="M300.0 481.5 C300.2 482.2 300.8 484.5 301.3 486.0 C301.8 487.5 302.6 489.8 302.8 490.5 C303.1 489.8 304.3 487.6 304.8 486.0 C305.3 484.4 305.5 481.8 305.6 481.0Z" fill="#eec9a0" stroke="#1c130e" stroke-width="1.92" stroke-linejoin="round" stroke-linecap="round" />
<path d="M317.0 190.0 C315.7 192.6 310.7 200.5 309.4 205.7 C308.1 210.9 308.6 215.8 309.4 221.0 C310.2 226.2 311.6 231.2 314.0 237.0 C316.4 242.8 321.7 251.1 323.5 255.8 C325.3 260.5 325.5 261.9 325.0 265.0 C324.5 268.1 323.5 272.2 320.4 274.6 C317.3 277.0 308.6 278.5 306.3 279.3 C307.9 279.6 312.4 281.4 315.7 281.0 C319.0 280.6 323.4 278.8 326.0 277.0 C328.6 275.2 330.2 271.2 331.0 270.0 C331.6 271.6 333.2 275.5 334.6 279.4 C336.0 283.3 338.0 288.5 339.3 293.5 C340.6 298.5 342.4 303.2 342.5 309.2 C342.6 315.2 341.7 323.1 340.1 329.6 C338.5 336.1 336.3 342.7 333.0 348.4 C329.7 354.1 325.0 359.9 320.5 364.0 C316.0 368.1 310.2 371.9 306.0 373.0 C301.8 374.1 298.2 372.3 295.5 370.3 C292.8 368.3 290.4 364.0 290.0 360.9 C289.6 357.8 291.4 353.7 293.1 351.5 C294.8 349.3 298.0 347.9 300.2 347.6 C302.4 347.4 304.7 348.3 306.4 350.0 C308.1 351.7 309.6 356.5 310.3 357.8 C309.9 356.0 309.7 349.4 308.0 346.8 C306.3 344.2 303.3 342.4 300.2 342.1 C297.1 341.8 291.9 343.1 289.2 345.2 C286.4 347.3 284.6 351.5 283.7 354.6 C282.8 357.7 282.8 360.4 283.7 364.0 C284.6 367.6 286.2 373.4 289.2 376.0 C292.2 378.6 297.3 380.4 301.7 379.7 C306.1 379.0 310.8 375.6 315.8 372.0 C320.8 368.4 327.1 362.6 331.5 357.8 C335.9 353.0 338.9 347.2 342.0 343.0 C345.1 338.8 347.4 336.2 350.3 332.7 C353.2 329.1 358.1 323.5 359.7 321.7 C361.7 320.4 369.0 316.1 371.7 314.0 C374.4 311.9 375.2 311.3 375.8 309.4 C376.4 307.4 375.4 303.5 375.3 302.3 C374.8 300.2 376.2 295.4 372.0 290.0 C367.8 284.6 356.2 280.0 350.0 270.0 C343.8 260.0 338.3 241.7 335.0 230.0 C331.7 218.3 330.8 205.0 330.0 200.0Z" fill="#eec9a0" stroke="#1c130e" stroke-width="2.82" stroke-linejoin="round" stroke-linecap="round" />
<path d="M345.0 290.0 C347.0 289.0 353.0 294.8 358.0 297.0 C363.0 299.2 372.2 301.0 375.0 303.0 C377.8 305.0 375.8 307.2 375.0 309.0 C374.2 310.8 372.8 312.0 370.0 314.0 C367.2 316.0 361.5 318.0 358.0 321.0 C354.5 324.0 351.3 332.5 349.0 332.0 C346.7 331.5 344.5 322.8 344.0 318.0 C343.5 313.2 345.8 307.7 346.0 303.0 C346.2 298.3 343.0 291.0 345.0 290.0Z" fill="#dea56e" stroke="none" stroke-width="2.56" stroke-linejoin="round" stroke-linecap="round" />
<path d="M334.0 283.0 C334.8 283.2 337.0 291.2 338.0 296.0 C339.0 300.8 340.2 306.0 340.0 312.0 C339.8 318.0 338.5 326.5 337.0 332.0 C335.5 337.5 331.5 345.3 331.0 345.0 C330.5 344.7 333.3 335.8 334.0 330.0 C334.7 324.2 335.2 315.8 335.0 310.0 C334.8 304.2 333.2 299.5 333.0 295.0 C332.8 290.5 333.2 282.8 334.0 283.0Z" fill="#dea56e" stroke="none" stroke-width="2.56" stroke-linejoin="round" stroke-linecap="round" />
<path d="M330.0 352.0 C326.7 354.7 322.3 362.3 318.0 366.0 C313.7 369.7 305.0 372.6 304.0 374.0 C303.0 375.4 308.3 375.8 312.0 374.5 C315.7 373.2 321.7 370.1 326.0 366.0 C330.3 361.9 337.3 352.3 338.0 350.0 C338.7 347.7 333.3 349.3 330.0 352.0Z" fill="#dea56e" stroke="none" stroke-width="2.56" stroke-linejoin="round" stroke-linecap="round" />
<path d="M339.0 284.0 C339.8 286.7 342.8 294.3 344.0 300.0 C345.2 305.7 346.3 311.7 346.0 318.0 C345.7 324.3 344.2 332.0 342.0 338.0 C339.8 344.0 336.3 349.3 333.0 354.0 C329.7 358.7 323.8 364.0 322.0 366.0" fill="none" stroke="#1c130e" stroke-width="2.04" stroke-linejoin="round" stroke-linecap="round" />
<path d="M348.0 290.0 C348.7 292.5 351.5 299.7 352.0 305.0 C352.5 310.3 352.0 316.8 351.0 322.0 C350.0 327.2 346.8 333.7 346.0 336.0" fill="none" stroke="#1c130e" stroke-width="2.04" stroke-linejoin="round" stroke-linecap="round" />
<path d="M356.0 296.0 C356.3 298.0 358.2 303.7 358.0 308.0 C357.8 312.3 355.5 319.7 355.0 322.0" fill="none" stroke="#1c130e" stroke-width="2.04" stroke-linejoin="round" stroke-linecap="round" />
<path d="M364.0 299.0 C364.2 300.5 365.3 305.0 365.0 308.0 C364.7 311.0 362.5 315.5 362.0 317.0" fill="none" stroke="#1c130e" stroke-width="2.04" stroke-linejoin="round" stroke-linecap="round" />
<path d="M370.0 301.0 C370.1 302.2 370.8 305.8 370.5 308.0 C370.2 310.2 368.4 313.0 368.0 314.0" fill="none" stroke="#1c130e" stroke-width="1.8" stroke-linejoin="round" stroke-linecap="round" />
<path d="M331.5 279.4 C330.4 281.5 328.3 288.6 325.2 292.0 C322.1 295.4 316.9 298.1 312.7 299.8 C308.5 301.5 304.0 302.1 300.2 302.1 C296.4 302.1 292.1 301.2 290.0 300.0 C287.9 298.8 287.7 297.1 287.6 295.0 C287.5 292.9 287.9 289.0 289.2 287.2 C290.5 285.4 293.7 283.5 295.5 284.0 C297.3 284.5 299.4 287.8 300.2 290.4 C301.0 293.0 300.2 298.2 300.2 299.8 C301.1 299.5 304.4 299.8 305.6 298.2 C306.8 296.6 307.9 293.5 307.2 290.4 C306.5 287.3 304.2 282.0 301.7 279.4 C299.2 276.8 295.7 274.7 292.3 274.7 C288.9 274.7 284.0 277.0 281.3 279.4 C278.6 281.8 276.7 285.1 275.9 288.8 C275.1 292.5 275.2 297.4 276.6 301.3 C278.0 305.2 281.1 309.9 284.5 312.3 C287.9 314.7 294.9 315.0 297.0 315.5 C296.0 316.8 293.4 320.9 290.8 323.3 C288.2 325.7 284.8 328.3 281.3 329.6 C277.8 330.9 271.6 330.9 269.6 331.1 C271.6 331.2 277.2 332.7 281.3 331.9 C285.4 331.1 290.5 328.9 293.9 326.4 C297.3 323.9 300.4 318.6 301.7 317.0 C303.5 316.0 308.8 313.2 312.7 310.8 C316.6 308.4 321.4 306.3 325.2 302.9 C329.0 299.5 333.7 292.5 335.4 290.4Z" fill="#eec9a0" stroke="#1c130e" stroke-width="2.56" stroke-linejoin="round" stroke-linecap="round" />
<path d="M282.0 296.0 C282.7 297.7 283.5 303.7 286.0 306.0 C288.5 308.3 292.7 310.2 297.0 310.0 C301.3 309.8 307.5 307.2 312.0 305.0 C316.5 302.8 322.0 298.3 324.0 297.0" fill="none" stroke="#1c130e" stroke-width="1.8" stroke-linejoin="round" stroke-linecap="round" />
</g>
<g id="face">
<path d="M330.6 235.0 C330.6 237.4 329.7 244.6 330.6 249.6 C331.5 254.6 333.5 260.1 336.0 265.0 C338.5 269.9 342.2 275.1 345.5 279.3 C348.8 283.5 352.4 287.1 356.0 290.0 C359.6 292.9 363.7 295.0 367.4 296.6 C371.1 298.2 374.6 299.0 378.0 299.5 C381.4 300.0 384.3 300.3 387.8 299.7 C391.3 299.1 395.4 297.6 399.0 296.0 C402.6 294.4 406.3 293.3 409.7 290.3 C413.1 287.3 417.1 282.0 419.1 277.8 C421.2 273.6 421.5 269.2 422.0 265.0 C422.5 260.8 422.4 256.9 422.3 252.7 C422.2 248.5 421.8 244.6 421.5 240.0 C421.2 235.4 420.8 227.5 420.7 225.0 C418.9 220.0 416.8 201.7 410.0 195.0 C403.2 188.3 390.8 185.0 380.0 185.0 C369.2 185.0 353.2 186.7 345.0 195.0 C336.8 203.3 333.0 228.3 330.6 235.0Z" fill="#e6d5cb" stroke="#1c130e" stroke-width="2.56" stroke-linejoin="round" stroke-linecap="round" />
<path d="M333.0 240.0 C334.5 236.3 340.2 231.0 345.0 228.0 C349.8 225.0 356.2 222.3 362.0 222.0 C367.8 221.7 374.0 227.3 380.0 226.0 C386.0 224.7 391.7 216.3 398.0 214.0 C404.3 211.7 414.3 210.0 418.0 212.0 C421.7 214.0 422.2 224.0 420.0 226.0 C417.8 228.0 411.0 222.0 405.0 224.0 C399.0 226.0 390.8 233.7 384.0 238.0 C377.2 242.3 369.7 249.7 364.0 250.0 C358.3 250.3 354.7 240.0 350.0 240.0 C345.3 240.0 338.8 250.0 336.0 250.0 C333.2 250.0 331.5 243.7 333.0 240.0Z" fill="#d8bfb3" stroke="none" stroke-width="2.56" stroke-linejoin="round" stroke-linecap="round" />
<path d="M374.5 269.5 C374.8 269.1 375.7 267.6 376.5 267.3 C377.3 267.0 378.8 267.3 379.5 267.6 C380.2 267.9 380.8 269.0 381.0 269.3" fill="none" stroke="#8a6a5c" stroke-width="1.68" stroke-linejoin="round" stroke-linecap="round" />
<path d="M370.5 285.0 C371.8 284.8 375.4 284.8 378.0 284.0 C380.6 283.2 383.5 281.5 386.0 280.0 C388.5 278.5 391.8 275.8 393.0 275.0 C392.8 276.5 392.8 281.3 392.0 284.0 C391.2 286.7 389.5 289.4 388.0 291.0 C386.5 292.6 384.7 293.5 383.0 293.5 C381.3 293.5 379.7 292.0 378.0 291.0 C376.3 290.0 374.2 288.5 373.0 287.5 C371.8 286.5 370.9 285.4 370.5 285.0Z" fill="#1c130e" stroke="#1c130e" stroke-width="1.79" stroke-linejoin="round" stroke-linecap="round" />
<path d="M382.0 290.5 C382.2 289.5 383.7 287.8 385.0 287.0 C386.3 286.2 389.1 285.2 390.0 285.5 C390.9 285.8 390.9 287.4 390.5 288.5 C390.1 289.6 388.6 291.2 387.5 292.0 C386.4 292.8 384.9 293.2 384.0 293.0 C383.1 292.8 381.8 291.5 382.0 290.5Z" fill="#f1a3cb" stroke="none" stroke-width="2.56" stroke-linejoin="round" stroke-linecap="round" />
<path d="M367.5 283.0 C367.8 283.4 368.3 285.1 369.0 285.5 C369.7 285.9 371.1 285.5 371.5 285.5" fill="none" stroke="#1c130e" stroke-width="1.56" stroke-linejoin="round" stroke-linecap="round" />
<path d="M391.0 271.5 C391.4 271.8 392.9 272.2 393.5 273.0 C394.1 273.8 394.3 275.5 394.5 276.0" fill="none" stroke="#1c130e" stroke-width="1.56" stroke-linejoin="round" stroke-linecap="round" />
<path d="M335.5 262.0 C335.8 259.4 337.1 256.2 339.0 254.5 C340.9 252.8 344.3 251.6 347.0 251.5 C349.7 251.4 352.8 252.2 355.0 254.0 C357.2 255.8 359.5 259.2 360.0 262.0 C360.5 264.8 359.5 268.7 358.0 271.0 C356.5 273.3 353.5 275.2 351.0 276.0 C348.5 276.8 345.3 276.5 343.0 275.5 C340.7 274.5 338.2 272.2 337.0 270.0 C335.8 267.8 335.2 264.6 335.5 262.0Z" fill="#fff" stroke="#1c130e" stroke-width="2.05" stroke-linejoin="round" stroke-linecap="round" />
<path d="M336.0 262.0 C336.1 259.5 337.3 256.6 339.0 255.0 C340.7 253.4 344.0 252.5 346.0 252.5 C348.0 252.5 350.0 253.2 351.0 255.0 C352.0 256.8 352.3 260.3 352.0 263.0 C351.7 265.7 350.3 269.0 349.0 271.0 C347.7 273.0 345.8 275.2 344.0 275.0 C342.2 274.8 339.8 272.2 338.5 270.0 C337.2 267.8 335.9 264.5 336.0 262.0Z" fill="#1c130e" stroke="none" stroke-width="2.56" stroke-linejoin="round" stroke-linecap="round" />
<path d="M345.0 259.0 C345.1 257.9 346.0 255.8 347.0 255.0 C348.0 254.2 350.0 254.2 351.0 254.5 C352.0 254.8 352.9 255.9 353.0 257.0 C353.1 258.1 351.9 259.6 351.5 261.0 C351.1 262.4 351.2 264.9 350.5 265.5 C349.8 266.1 348.2 265.2 347.5 264.5 C346.8 263.8 346.9 262.4 346.5 261.5 C346.1 260.6 344.9 260.1 345.0 259.0Z" fill="#fff" stroke="none" stroke-width="2.56" stroke-linejoin="round" stroke-linecap="round" />
<circle cx="344.2" cy="269" r="1.2" fill="#fff"/>
<path d="M331.0 262.0 C331.8 261.0 333.8 257.8 336.0 256.0 C338.2 254.2 341.2 251.8 344.0 251.0 C346.8 250.2 350.3 250.5 353.0 251.5 C355.7 252.5 358.8 256.1 360.0 257.0" fill="none" stroke="#1c130e" stroke-width="2.64" stroke-linejoin="round" stroke-linecap="round" />
<path d="M329.0 262.5 C329.7 262.6 331.8 263.2 333.0 263.0 C334.2 262.8 335.5 261.3 336.0 261.0" fill="none" stroke="#1c130e" stroke-width="2.16" stroke-linejoin="round" stroke-linecap="round" />
<path d="M329.8 244.3 C331.2 243.8 335.3 242.1 338.0 241.5 C340.7 240.9 343.7 240.9 346.0 241.0 C348.3 241.1 350.8 242.0 351.7 242.2" fill="none" stroke="#1c130e" stroke-width="2.16" stroke-linejoin="round" stroke-linecap="round" />
<path d="M386.0 246.0 C386.2 243.3 387.0 238.7 389.0 236.0 C391.0 233.3 394.8 230.8 398.0 230.0 C401.2 229.2 405.2 229.7 408.0 231.0 C410.8 232.3 413.7 235.2 415.0 238.0 C416.3 240.8 416.7 245.0 416.0 248.0 C415.3 251.0 413.3 254.1 411.0 256.0 C408.7 257.9 405.0 259.2 402.0 259.5 C399.0 259.8 395.3 258.8 393.0 257.5 C390.7 256.2 389.2 253.9 388.0 252.0 C386.8 250.1 385.8 248.7 386.0 246.0Z" fill="#fff" stroke="#1c130e" stroke-width="2.18" stroke-linejoin="round" stroke-linecap="round" />
<path d="M387.0 246.0 C387.3 243.7 388.3 239.3 390.0 237.0 C391.7 234.7 394.7 232.7 397.0 232.0 C399.3 231.3 402.5 231.3 404.0 233.0 C405.5 234.7 406.0 239.0 406.0 242.0 C406.0 245.0 405.2 248.3 404.0 251.0 C402.8 253.7 401.0 257.2 399.0 258.0 C397.0 258.8 393.8 257.2 392.0 256.0 C390.2 254.8 388.8 252.7 388.0 251.0 C387.2 249.3 386.7 248.3 387.0 246.0Z" fill="#1c130e" stroke="none" stroke-width="2.56" stroke-linejoin="round" stroke-linecap="round" />
<path d="M397.5 240.0 C397.4 238.8 398.4 236.9 399.5 236.0 C400.6 235.1 402.7 234.3 404.0 234.5 C405.3 234.7 407.2 235.8 407.5 237.0 C407.8 238.2 406.3 240.3 406.0 242.0 C405.7 243.7 406.2 246.2 405.5 247.0 C404.8 247.8 402.9 247.1 402.0 246.5 C401.1 245.9 400.8 244.6 400.0 243.5 C399.2 242.4 397.6 241.2 397.5 240.0Z" fill="#fff" stroke="none" stroke-width="2.56" stroke-linejoin="round" stroke-linecap="round" />
<circle cx="395.5" cy="253" r="1.5" fill="#fff"/>
<path d="M383.0 243.0 C383.8 241.7 385.7 237.2 388.0 235.0 C390.3 232.8 393.7 230.4 397.0 229.5 C400.3 228.6 404.8 228.8 408.0 229.5 C411.2 230.2 414.7 233.2 416.0 234.0" fill="none" stroke="#1c130e" stroke-width="2.88" stroke-linejoin="round" stroke-linecap="round" />
<path d="M414.0 232.0 C414.7 231.5 416.8 229.7 418.0 229.0 C419.2 228.3 420.5 228.2 421.0 228.0" fill="none" stroke="#1c130e" stroke-width="1.92" stroke-linejoin="round" stroke-linecap="round" />
<path d="M415.0 236.0 C415.7 235.8 417.8 234.8 419.0 234.5 C420.2 234.2 421.5 234.5 422.0 234.5" fill="none" stroke="#1c130e" stroke-width="1.92" stroke-linejoin="round" stroke-linecap="round" />
<path d="M382.0 231.0 C383.3 230.0 387.2 226.6 390.0 225.0 C392.8 223.4 396.0 222.2 399.0 221.5 C402.0 220.8 406.5 220.7 408.0 220.5" fill="none" stroke="#1c130e" stroke-width="2.16" stroke-linejoin="round" stroke-linecap="round" />
</g>
<g id="hair-front">
<path d="M309.4 217.7 C309.7 215.1 309.7 207.2 311.0 202.0 C312.3 196.8 314.3 191.0 317.2 186.3 C320.1 181.6 324.8 177.1 328.2 173.8 C331.6 170.6 332.3 168.8 337.6 166.8 C342.9 164.8 351.3 163.1 360.0 162.0 C368.7 160.9 380.2 160.9 390.0 160.0 C399.8 159.1 411.0 154.6 419.0 156.6 C427.0 158.6 432.8 166.5 438.0 172.2 C443.2 177.9 446.8 185.0 450.5 191.0 C454.2 197.0 457.4 203.1 460.0 208.3 C462.6 213.5 465.0 219.7 466.0 222.0 C465.3 228.3 463.7 247.0 462.0 260.0 C460.3 273.0 458.8 286.7 456.0 300.0 C453.2 313.3 446.8 333.3 445.0 340.0 C438.5 338.7 412.3 333.3 405.8 332.0 C406.0 329.2 406.0 320.3 407.0 315.0 C408.0 309.7 409.7 305.7 412.0 300.0 C414.3 294.3 418.8 286.5 421.0 281.0 C423.2 275.5 424.7 271.3 425.4 267.0 C426.1 262.7 425.3 259.0 425.0 255.0 C424.7 251.0 424.8 249.0 423.8 242.8 C422.8 236.6 420.9 224.3 419.1 217.7 C417.3 211.1 414.0 205.4 413.0 203.0 C412.8 204.7 412.6 209.8 412.0 213.0 C411.4 216.2 410.1 220.8 409.7 222.4 C408.6 222.4 404.4 222.4 403.4 222.4 C402.8 221.3 400.6 217.1 400.0 216.0 C399.0 216.3 396.2 216.4 394.0 217.7 C391.8 219.0 389.1 221.7 387.0 224.0 C384.9 226.3 382.4 230.2 381.5 231.5 C380.7 228.4 378.9 218.9 376.8 213.0 C374.7 207.1 370.8 199.6 369.0 195.8 C367.2 192.0 366.5 191.0 366.0 190.0 C365.7 192.0 364.3 196.1 364.3 202.0 C364.3 207.9 366.3 217.9 365.8 225.5 C365.3 233.1 361.9 243.8 361.1 247.5 C360.3 245.2 358.5 238.9 356.4 233.4 C354.3 227.9 349.9 217.7 348.6 214.6 C348.4 215.4 348.5 217.0 347.5 219.5 C346.5 222.0 344.9 226.3 342.5 229.5 C340.1 232.7 336.2 236.3 333.0 238.5 C329.8 240.7 326.3 241.9 323.5 242.8 C320.7 243.7 317.2 243.6 316.0 243.8 C315.2 241.7 312.6 235.3 311.5 231.0 C310.4 226.7 309.8 219.9 309.4 217.7Z" fill="#eec9a0" stroke="none" stroke-width="2.56" stroke-linejoin="round" stroke-linecap="round" />
<path d="M430.0 262.0 C432.0 257.7 438.7 257.3 440.0 262.0 C441.3 266.7 440.0 280.7 438.0 290.0 C436.0 299.3 431.3 311.0 428.0 318.0 C424.7 325.0 421.0 329.7 418.0 332.0 C415.0 334.3 409.7 335.7 410.0 332.0 C410.3 328.3 417.0 317.3 420.0 310.0 C423.0 302.7 426.3 296.0 428.0 288.0 C429.7 280.0 428.0 266.3 430.0 262.0Z" fill="#dea56e" stroke="none" stroke-width="2.56" stroke-linejoin="round" stroke-linecap="round" />
<path d="M446.0 250.0 C448.3 242.5 455.0 247.5 456.0 255.0 C457.0 262.5 454.3 281.7 452.0 295.0 C449.7 308.3 445.3 328.3 442.0 335.0 C438.7 341.7 432.0 340.8 432.0 335.0 C432.0 329.2 439.7 314.2 442.0 300.0 C444.3 285.8 443.7 257.5 446.0 250.0Z" fill="#dea56e" stroke="none" stroke-width="2.56" stroke-linejoin="round" stroke-linecap="round" />
<path d="M309.4 217.7 C309.7 215.1 309.7 207.2 311.0 202.0 C312.3 196.8 314.3 191.0 317.2 186.3 C320.1 181.6 324.8 177.1 328.2 173.8 C331.6 170.6 332.3 168.8 337.6 166.8 C342.9 164.8 351.3 163.1 360.0 162.0 C368.7 160.9 380.2 160.9 390.0 160.0 C399.8 159.1 411.0 154.6 419.0 156.6 C427.0 158.6 432.8 166.5 438.0 172.2 C443.2 177.9 446.8 185.0 450.5 191.0 C454.2 197.0 457.4 203.1 460.0 208.3 C462.6 213.5 465.0 219.7 466.0 222.0" fill="none" stroke="#1c130e" stroke-width="2.76" stroke-linejoin="round" stroke-linecap="round" />
<path d="M405.8 332.0 C406.0 329.2 406.0 320.3 407.0 315.0 C408.0 309.7 409.7 305.7 412.0 300.0 C414.3 294.3 418.8 286.5 421.0 281.0 C423.2 275.5 424.7 271.3 425.4 267.0 C426.1 262.7 425.3 259.0 425.0 255.0 C424.7 251.0 424.8 249.0 423.8 242.8 C422.8 236.6 420.9 224.3 419.1 217.7 C417.3 211.1 414.0 205.4 413.0 203.0 C412.8 204.7 412.6 209.8 412.0 213.0 C411.4 216.2 410.1 220.8 409.7 222.4 C408.6 222.4 404.4 222.4 403.4 222.4 C402.8 221.3 400.6 217.1 400.0 216.0 C399.0 216.3 396.2 216.4 394.0 217.7 C391.8 219.0 389.1 221.7 387.0 224.0 C384.9 226.3 382.4 230.2 381.5 231.5 C380.7 228.4 378.9 218.9 376.8 213.0 C374.7 207.1 370.8 199.6 369.0 195.8 C367.2 192.0 366.5 191.0 366.0 190.0 C365.7 192.0 364.3 196.1 364.3 202.0 C364.3 207.9 366.3 217.9 365.8 225.5 C365.3 233.1 361.9 243.8 361.1 247.5 C360.3 245.2 358.5 238.9 356.4 233.4 C354.3 227.9 349.9 217.7 348.6 214.6 C348.4 215.4 348.5 217.0 347.5 219.5 C346.5 222.0 344.9 226.3 342.5 229.5 C340.1 232.7 336.2 236.3 333.0 238.5 C329.8 240.7 326.3 241.9 323.5 242.8 C320.7 243.7 317.2 243.6 316.0 243.8 C315.2 241.7 312.6 235.3 311.5 231.0 C310.4 226.7 309.8 219.9 309.4 217.7" fill="none" stroke="#1c130e" stroke-width="2.28" stroke-linejoin="round" stroke-linecap="round" />
<path d="M336.0 168.0 C339.7 166.6 351.0 165.3 360.0 164.5 C369.0 163.7 380.3 163.9 390.0 163.0 C399.7 162.1 414.3 158.5 418.0 159.0 C421.7 159.5 416.7 164.3 412.0 166.0 C407.3 167.7 398.7 168.3 390.0 169.0 C381.3 169.7 368.7 169.3 360.0 170.0 C351.3 170.7 342.0 173.3 338.0 173.0 C334.0 172.7 332.3 169.4 336.0 168.0Z" fill="#dea56e" stroke="none" stroke-width="2.56" stroke-linejoin="round" stroke-linecap="round" />
<path d="M408.0 186.0 C409.7 185.3 417.3 188.0 422.0 192.0 C426.7 196.0 431.7 203.3 436.0 210.0 C440.3 216.7 444.7 225.3 448.0 232.0 C451.3 238.7 456.3 247.0 456.0 250.0 C455.7 253.0 449.3 253.0 446.0 250.0 C442.7 247.0 439.5 238.3 436.0 232.0 C432.5 225.7 429.0 218.0 425.0 212.0 C421.0 206.0 414.8 200.3 412.0 196.0 C409.2 191.7 406.3 186.7 408.0 186.0Z" fill="#dea56e" stroke="none" stroke-width="2.56" stroke-linejoin="round" stroke-linecap="round" />
<path d="M355.0 180.0 C356.7 178.3 360.5 180.8 362.0 185.0 C363.5 189.2 363.6 197.8 364.0 205.0 C364.4 212.2 365.0 221.3 364.5 228.0 C364.0 234.7 362.4 244.3 361.0 245.0 C359.6 245.7 357.8 237.5 356.0 232.0 C354.2 226.5 350.7 218.2 350.0 212.0 C349.3 205.8 351.2 200.3 352.0 195.0 C352.8 189.7 353.3 181.7 355.0 180.0Z" fill="#dea56e" stroke="none" stroke-width="2.56" stroke-linejoin="round" stroke-linecap="round" />
<path d="M368.0 186.0 C369.0 185.2 373.7 188.0 376.0 192.0 C378.3 196.0 381.0 204.0 382.0 210.0 C383.0 216.0 382.8 227.5 382.0 228.0 C381.2 228.5 379.0 218.2 377.0 213.0 C375.0 207.8 371.5 201.5 370.0 197.0 C368.5 192.5 367.0 186.8 368.0 186.0Z" fill="#dea56e" stroke="none" stroke-width="2.56" stroke-linejoin="round" stroke-linecap="round" />
<path d="M392.0 192.0 C392.5 190.7 398.0 196.3 400.0 200.0 C402.0 203.7 403.5 210.5 404.0 214.0 C404.5 217.5 404.2 222.0 403.0 221.0 C401.8 220.0 398.8 212.8 397.0 208.0 C395.2 203.2 391.5 193.3 392.0 192.0Z" fill="#dea56e" stroke="none" stroke-width="2.56" stroke-linejoin="round" stroke-linecap="round" />
<path d="M316.0 192.0 C317.5 186.3 321.0 183.8 322.0 186.0 C323.0 188.2 321.7 198.5 322.0 205.0 C322.3 211.5 324.0 219.2 324.0 225.0 C324.0 230.8 323.3 237.8 322.0 240.0 C320.7 242.2 317.5 241.3 316.0 238.0 C314.5 234.7 313.0 227.7 313.0 220.0 C313.0 212.3 314.5 197.7 316.0 192.0Z" fill="#dea56e" stroke="none" stroke-width="2.56" stroke-linejoin="round" stroke-linecap="round" />
<path d="M334.0 178.0 C335.5 174.8 339.5 173.2 340.0 176.0 C340.5 178.8 337.3 188.5 337.0 195.0 C336.7 201.5 338.3 209.3 338.0 215.0 C337.7 220.7 336.3 229.0 335.0 229.0 C333.7 229.0 330.7 220.7 330.0 215.0 C329.3 209.3 330.3 201.2 331.0 195.0 C331.7 188.8 332.5 181.2 334.0 178.0Z" fill="#dea56e" stroke="none" stroke-width="2.56" stroke-linejoin="round" stroke-linecap="round" />
<path d="M323.0 178.0 C322.2 180.8 319.2 188.5 318.5 195.0 C317.8 201.5 318.3 209.5 319.0 217.0 C319.7 224.5 321.9 236.2 322.5 240.0" fill="none" stroke="#1c130e" stroke-width="1.8" stroke-linejoin="round" stroke-linecap="round" />
<path d="M330.0 174.0 C329.2 177.0 325.7 185.3 325.0 192.0 C324.3 198.7 325.2 206.3 326.0 214.0 C326.8 221.7 329.3 234.0 330.0 238.0" fill="none" stroke="#1c130e" stroke-width="1.8" stroke-linejoin="round" stroke-linecap="round" />
<path d="M337.0 183.0 C336.3 185.8 333.5 193.8 333.0 200.0 C332.5 206.2 333.3 214.5 334.0 220.0 C334.7 225.5 336.5 230.8 337.0 233.0" fill="none" stroke="#1c130e" stroke-width="1.8" stroke-linejoin="round" stroke-linecap="round" />
<path d="M352.0 173.0 C350.7 175.5 345.7 182.7 344.0 188.0 C342.3 193.3 341.7 199.3 342.0 205.0 C342.3 210.7 345.3 219.2 346.0 222.0" fill="none" stroke="#1c130e" stroke-width="1.8" stroke-linejoin="round" stroke-linecap="round" />
<path d="M363.0 175.0 C362.2 177.8 358.8 185.8 358.0 192.0 C357.2 198.2 357.5 204.0 358.0 212.0 C358.5 220.0 360.5 235.3 361.0 240.0" fill="none" stroke="#1c130e" stroke-width="1.8" stroke-linejoin="round" stroke-linecap="round" />
<path d="M364.0 178.0 C364.3 180.0 365.7 188.0 366.0 190.0" fill="none" stroke="#1c130e" stroke-width="1.8" stroke-linejoin="round" stroke-linecap="round" />
<path d="M371.0 182.0 C372.2 184.5 376.2 191.5 378.0 197.0 C379.8 202.5 381.4 209.5 382.0 215.0 C382.6 220.5 381.6 227.5 381.5 230.0" fill="none" stroke="#1c130e" stroke-width="1.8" stroke-linejoin="round" stroke-linecap="round" />
<path d="M378.0 180.0 C379.7 182.5 385.5 190.0 388.0 195.0 C390.5 200.0 392.0 206.3 393.0 210.0 C394.0 213.7 393.8 215.8 394.0 217.0" fill="none" stroke="#1c130e" stroke-width="1.8" stroke-linejoin="round" stroke-linecap="round" />
<path d="M388.0 183.0 C389.5 185.2 394.7 191.5 397.0 196.0 C399.3 200.5 400.9 205.8 402.0 210.0 C403.1 214.2 403.2 219.2 403.4 221.0" fill="none" stroke="#1c130e" stroke-width="1.8" stroke-linejoin="round" stroke-linecap="round" />
<path d="M397.0 186.0 C398.5 188.0 403.9 193.2 406.0 198.0 C408.1 202.8 409.1 212.2 409.7 215.0" fill="none" stroke="#1c130e" stroke-width="1.8" stroke-linejoin="round" stroke-linecap="round" />
<path d="M404.0 188.0 C405.7 190.0 411.3 195.0 414.0 200.0 C416.7 205.0 418.3 210.8 420.0 218.0 C421.7 225.2 423.3 238.8 424.0 243.0" fill="none" stroke="#1c130e" stroke-width="1.8" stroke-linejoin="round" stroke-linecap="round" />
<path d="M413.0 182.0 C415.5 184.3 423.5 190.3 428.0 196.0 C432.5 201.7 436.3 208.7 440.0 216.0 C443.7 223.3 448.3 236.0 450.0 240.0" fill="none" stroke="#1c130e" stroke-width="1.8" stroke-linejoin="round" stroke-linecap="round" />
<path d="M438.0 222.0 C437.2 225.8 434.2 237.0 433.0 245.0 C431.8 253.0 431.3 265.8 431.0 270.0" fill="none" stroke="#1c130e" stroke-width="1.8" stroke-linejoin="round" stroke-linecap="round" />
<path d="M398.8 218.2 L402.6 217.2 L403.6 221.8 L400 222.8 Z" fill="#fff" stroke="none" stroke-width="2.56" stroke-linejoin="round" stroke-linecap="round" />
<path d="M426.5 221.0 C426.9 220.5 427.8 218.3 429.0 217.8 C430.2 217.3 432.6 217.3 434.0 218.0 C435.4 218.7 436.8 220.3 437.5 222.0 C438.2 223.7 438.3 226.2 438.0 228.0 C437.7 229.8 436.5 231.9 435.5 233.0 C434.5 234.1 432.6 234.2 432.0 234.5 C432.0 233.4 432.9 230.2 432.0 228.0 C431.1 225.8 427.4 222.2 426.5 221.0Z" fill="#e6d5cb" stroke="#1c130e" stroke-width="2.18" stroke-linejoin="round" stroke-linecap="round" />
<path d="M430.0 222.0 C430.6 222.3 432.8 222.8 433.5 224.0 C434.2 225.2 434.3 228.2 434.5 229.0" fill="none" stroke="#b89a8c" stroke-width="1.32" stroke-linejoin="round" stroke-linecap="round" />
<path d="M437.5 280.0 C435.9 283.3 431.6 293.7 428.0 300.0 C424.4 306.3 419.1 313.7 416.0 318.0 C412.9 322.3 410.4 324.7 409.3 326.0" fill="none" stroke="#1c130e" stroke-width="1.92" stroke-linejoin="round" stroke-linecap="round" />
<path d="M444.0 268.0 C443.3 272.5 442.3 286.3 440.0 295.0 C437.7 303.7 433.3 313.7 430.0 320.0 C426.7 326.3 421.7 330.8 420.0 333.0" fill="none" stroke="#1c130e" stroke-width="1.92" stroke-linejoin="round" stroke-linecap="round" />
<path d="M452.0 262.0 C451.7 267.5 451.7 284.5 450.0 295.0 C448.3 305.5 444.3 317.8 442.0 325.0 C439.7 332.2 437.0 335.8 436.0 338.0" fill="none" stroke="#1c130e" stroke-width="1.92" stroke-linejoin="round" stroke-linecap="round" />
<path d="M433.0 270.0 C431.8 273.3 428.8 284.0 426.0 290.0 C423.2 296.0 417.7 303.3 416.0 306.0" fill="none" stroke="#1c130e" stroke-width="1.92" stroke-linejoin="round" stroke-linecap="round" />
</g>
<g id="crown">
<path d="M320.4 145.5 C320 139 325 136 330 136.8 C338 137.5 347 143 353.3 141.5 C358 138 364 113 370.5 111.8 C377 111.5 388 130.5 394 131.3 C401 131.5 412 119 420.7 120 C426 121 428 126 427 131.3 C426 141 423 150 419.1 156.4 C416 161 413 164 409.7 164.3 C397 165.5 384 161.5 370.5 161.9 C358 162.5 347 165.5 336 166.6 C332 166.5 328.5 163.5 326.6 160.3 C323 155 320.8 150 320.4 145.5 Z" fill="#8fe8e8" stroke="#1c130e" stroke-width="2.9" stroke-linejoin="round"/>
<circle cx="337.6" cy="152.5" r="4.8" fill="#eec9a0" stroke="#1c130e" stroke-width="2.3"/>
<circle cx="402.7" cy="145.1" r="4.8" fill="#eec9a0" stroke="#1c130e" stroke-width="2.3"/>
<path d="M372.9 143.2 C370.9 138.1 364.3 138.8 364.6 143.8 C365.0 148.5 370.4 152.5 372.9 154.3 C375.4 152.5 380.8 148.5 381.1 143.8 C381.5 138.8 374.9 138.1 372.9 143.2 Z" fill="#f1a3cb" stroke="#1c130e" stroke-width="2.3" stroke-linejoin="round" transform="rotate(-4 372.9 146.6)"/>
</g>
<g id="fish">
<path d="M207.3 196.5 C207.5 195.4 208.8 192.4 208.2 190.0 C207.6 187.6 205.3 184.4 203.6 181.8 C201.9 179.2 199.1 175.7 198.2 174.5 C199.2 174.1 201.8 172.0 204.5 171.8 C207.2 171.6 211.8 171.4 214.5 173.1 C217.2 174.8 219.2 178.4 220.9 181.8 C222.6 185.2 223.9 191.6 224.5 193.6 C225.7 193.9 229.4 194.7 231.8 195.5 C234.2 196.3 237.9 197.8 239.1 198.2 C238.2 198.9 236.0 200.9 233.6 202.2 C231.2 203.5 227.5 205.2 224.5 206.0 C221.5 206.8 217.0 206.8 215.5 207.0Z" fill="#8fe8e8" stroke="#1c130e" stroke-width="2.56" stroke-linejoin="round" stroke-linecap="round" />
<path d="M202.7 255.3 C203.2 256.4 203.7 259.7 205.5 261.8 C207.3 263.9 211.0 266.5 213.6 268.2 C216.2 269.9 219.7 271.2 220.9 271.8 C221.5 271.3 223.7 270.1 224.5 269.0 C225.3 267.9 225.8 265.7 226.0 265.0Z" fill="#8fe8e8" stroke="#1c130e" stroke-width="2.56" stroke-linejoin="round" stroke-linecap="round" />
<path d="M210.9 200.9 C210.3 200.0 209.6 195.8 207.3 195.5 C205.0 195.2 200.0 197.1 197.3 199.1 C194.6 201.1 192.1 204.1 190.9 207.3 C189.8 210.5 189.8 214.0 190.4 218.2 C191.0 222.4 192.6 227.8 194.5 232.7 C196.4 237.5 199.2 242.9 201.8 247.3 C204.4 251.7 207.0 255.7 210.0 259.0 C213.0 262.3 216.7 264.7 220.0 267.0 C223.3 269.3 226.8 271.3 230.0 272.7 C233.2 274.1 236.1 274.6 239.1 275.5 C242.1 276.4 246.7 277.4 248.2 277.8 C249.5 273.2 254.5 261.9 256.0 250.0 C257.5 238.1 257.1 213.7 257.3 206.4 C256.4 206.1 254.2 205.0 251.8 204.5 C249.4 204.0 246.3 203.6 242.7 203.6 C239.1 203.6 233.0 204.3 230.0 204.5 C227.0 204.7 226.9 204.7 224.5 204.5 C222.1 204.3 217.8 204.2 215.5 203.6 C213.2 203.0 211.7 201.3 210.9 200.9Z" fill="#8fe8e8" stroke="#1c130e" stroke-width="2.56" stroke-linejoin="round" stroke-linecap="round" />
<path d="M211.0 198.5 C210.8 199.2 209.9 201.5 210.0 203.0 C210.1 204.5 210.5 206.2 211.5 207.5 C212.5 208.8 214.2 210.0 216.0 210.5 C217.8 211.0 220.3 210.9 222.0 210.5 C223.7 210.1 225.3 208.4 226.0 208.0 C224.8 207.8 220.9 207.8 219.0 207.0 C217.1 206.2 215.5 204.8 214.5 203.5 C213.5 202.2 213.2 199.8 213.0 199.0Z" fill="#fff" stroke="#1c130e" stroke-width="2.05" stroke-linejoin="round" stroke-linecap="round" />
<path d="M257.3 206.4 C256.1 207.4 252.4 209.8 250.0 212.7 C247.6 215.6 245.0 219.3 242.7 223.6 C240.4 227.8 237.8 233.3 236.4 238.2 C235.0 243.0 234.3 248.1 234.5 252.7 C234.7 257.2 235.9 261.9 237.3 265.5 C238.7 269.1 240.9 272.4 242.7 274.5 C244.5 276.6 247.3 277.2 248.2 277.8 C249.1 278.0 251.5 279.2 253.6 279.1 C255.7 279.0 258.3 278.4 260.9 277.3 C263.5 276.2 266.8 274.4 269.1 272.7 C271.4 271.0 273.1 269.4 274.5 267.3 C275.9 265.2 277.1 262.1 277.3 260.0 C277.5 257.9 276.4 256.3 275.5 254.5 C274.6 252.7 272.4 250.0 271.8 249.1 C272.2 248.2 273.4 246.3 274.0 243.6 C274.6 240.9 275.3 236.6 275.1 232.7 C274.9 228.8 274.1 223.6 272.7 220.0 C271.2 216.4 269.0 213.2 266.4 210.9 C263.8 208.6 258.8 207.2 257.3 206.4Z" fill="#edc79d" stroke="#1c130e" stroke-width="2.56" stroke-linejoin="round" stroke-linecap="round" />
<path d="M257.3 258.2 C257.6 255.6 259.1 253.2 260.9 251.8 C262.7 250.4 265.9 249.7 268.2 250.0 C270.5 250.3 273.0 251.9 274.5 253.6 C276.0 255.3 277.3 257.7 277.3 260.0 C277.3 262.3 275.9 265.2 274.5 267.3 C273.1 269.4 271.1 271.9 269.1 272.7 C267.1 273.4 264.4 272.7 262.7 271.8 C261.0 270.9 260.0 269.6 259.1 267.3 C258.2 265.0 257.0 260.8 257.3 258.2Z" fill="#dba873" stroke="none" stroke-width="2.56" stroke-linejoin="round" stroke-linecap="round" />
<path d="M257.3 258.2 C257.9 257.1 259.1 253.2 260.9 251.8 C262.7 250.4 266.3 250.1 268.2 250.0 C270.1 249.9 271.4 250.8 272.0 251.0" fill="none" stroke="#1c130e" stroke-width="1.92" stroke-linejoin="round" stroke-linecap="round" />
<path d="M254.5 263.6 C255.0 264.2 256.2 266.5 257.3 267.3 C258.4 268.1 259.8 268.5 260.9 268.2 C261.9 267.9 263.2 265.9 263.6 265.5" fill="none" stroke="#1c130e" stroke-width="1.92" stroke-linejoin="round" stroke-linecap="round" />
<path d="M263.6 265.5 C263.7 266.1 263.4 267.8 264.0 269.0 C264.6 270.2 266.5 271.9 267.0 272.5" fill="none" stroke="#1c130e" stroke-width="1.68" stroke-linejoin="round" stroke-linecap="round" />
<ellipse cx="276" cy="259.3" rx="2.3" ry="4.8" fill="#1c130e"/>
<path d="M254.5 232.5 C254.2 230.4 256.1 227.3 257.3 225.5 C258.5 223.7 260.1 222.3 261.8 221.8 C263.5 221.3 266.0 221.5 267.3 222.7 C268.6 223.9 269.3 226.8 269.6 229.1 C269.9 231.4 269.8 234.3 269.1 236.4 C268.4 238.5 267.2 241.5 265.5 241.8 C263.8 242.1 260.9 239.8 259.1 238.2 C257.3 236.6 254.8 234.6 254.5 232.5Z" fill="#fff" stroke="#1c130e" stroke-width="2.05" stroke-linejoin="round" stroke-linecap="round" />
<path d="M261.0 223.0 C262.2 222.0 265.2 222.2 266.5 223.2 C267.8 224.2 268.6 226.9 269.0 229.0 C269.4 231.1 269.2 234.0 268.6 236.0 C268.0 238.0 266.7 240.9 265.3 241.0 C263.9 241.1 261.5 238.4 260.5 236.4 C259.5 234.4 259.2 231.3 259.3 229.1 C259.4 226.9 259.8 224.0 261.0 223.0Z" fill="#1c130e" stroke="none" stroke-width="2.56" stroke-linejoin="round" stroke-linecap="round" />
<circle cx="261.3" cy="228.3" r="2.1" fill="#fff"/><circle cx="264.6" cy="237.3" r="1" fill="#fff"/>
<path d="M254.0 233.5 C254.5 232.2 255.6 227.6 257.0 225.5 C258.4 223.4 260.5 221.4 262.3 220.9 C264.1 220.4 267.1 222.1 268.0 222.3" fill="none" stroke="#1c130e" stroke-width="2.88" stroke-linejoin="round" stroke-linecap="round" />
<path d="M215.5 230.5 C216.7 230.8 220.1 231.4 222.7 232.2 C225.3 233.0 229.8 234.9 231.2 235.5 C230.8 236.3 230.2 239.1 228.8 240.5 C227.4 241.9 224.8 243.4 222.7 243.8 C220.6 244.2 218.1 244.1 216.5 243.2 C214.9 242.3 213.6 240.0 213.2 238.2 C212.8 236.4 213.4 233.6 213.8 232.3 C214.2 231.0 215.2 230.8 215.5 230.5Z" fill="#f1a3cb" stroke="#1c130e" stroke-width="2.18" stroke-linejoin="round" stroke-linecap="round" />
<path d="M215.0 236.8 C216.0 237.0 218.7 237.9 221.0 238.2 C223.3 238.5 227.3 238.5 228.6 238.6" fill="none" stroke="#1c130e" stroke-width="1.68" stroke-linejoin="round" stroke-linecap="round" />
<path d="M209.0 211.0 C208.6 211.7 206.8 213.5 206.5 215.0 C206.2 216.5 207.3 219.2 207.5 220.0" fill="none" stroke="#1c130e" stroke-width="1.68" stroke-linejoin="round" stroke-linecap="round" />
<path d="M228.0 215.0 C228.5 215.3 230.3 216.0 231.0 217.0 C231.7 218.0 231.8 220.3 232.0 221.0" fill="none" stroke="#1c130e" stroke-width="1.68" stroke-linejoin="round" stroke-linecap="round" />
<path d="M223.0 219.0 C222.5 219.5 220.5 220.8 220.0 222.0 C219.5 223.2 220.0 225.3 220.0 226.0" fill="none" stroke="#1c130e" stroke-width="1.68" stroke-linejoin="round" stroke-linecap="round" />
<path d="M204.0 228.0 C203.7 228.7 202.2 230.7 202.0 232.0 C201.8 233.3 202.8 235.3 203.0 236.0" fill="none" stroke="#1c130e" stroke-width="1.68" stroke-linejoin="round" stroke-linecap="round" />
<path d="M206.0 243.0 C206.2 243.7 206.5 245.8 207.0 247.0 C207.5 248.2 208.7 249.5 209.0 250.0" fill="none" stroke="#1c130e" stroke-width="1.68" stroke-linejoin="round" stroke-linecap="round" />
<path d="M222.0 254.0 C222.3 254.5 223.8 255.8 224.0 257.0 C224.2 258.2 223.6 260.3 223.5 261.0" fill="none" stroke="#1c130e" stroke-width="1.68" stroke-linejoin="round" stroke-linecap="round" />
<circle cx="245.5" cy="221.5" r="1.1" fill="#1c130e"/>
<path d="M182.7 192.5 C182.3 193.3 180.8 195.8 180.6 197.5 C180.3 199.2 181.1 202.1 181.2 203.0" fill="none" stroke="#1c130e" stroke-width="1.32" stroke-linejoin="round" stroke-linecap="round" />
<path d="M181.8 233.6 C182.2 234.1 183.4 236.0 184.5 236.8 C185.6 237.6 187.8 238.1 188.4 238.4" fill="none" stroke="#1c130e" stroke-width="1.32" stroke-linejoin="round" stroke-linecap="round" />
<path d="M180.0 242.7 C180.7 243.2 182.4 245.2 184.0 246.0 C185.6 246.8 188.4 247.2 189.3 247.5" fill="none" stroke="#1c130e" stroke-width="1.32" stroke-linejoin="round" stroke-linecap="round" />
</g>
<circle cx="296.7" cy="176.9" r="6.5" fill="#3cb8b8" stroke="#1c130e" stroke-width="2.5"/>
<ellipse cx="286.4" cy="204.6" rx="6.4" ry="7" fill="#3cb8b8" stroke="#1c130e" stroke-width="2.5"/>
<path d="M292.3 237.7 C290.3 231.3 283.5 232.2 283.8 238.5 C284.1 244.3 289.8 249.4 292.3 251.8 C294.9 249.4 300.5 244.3 300.8 238.5 C301.1 232.2 294.3 231.3 292.3 237.7 Z" fill="#f1a3cb" stroke="#1c130e" stroke-width="2.4" stroke-linejoin="round" transform="rotate(-12 292.3 242.0)"/>
<defs><clipPath id="lens"><circle cx="415.8" cy="385.8" r="45.6"/></clipPath><clipPath id="topHalf"><rect x="350" y="320" width="140" height="65.7"/></clipPath><clipPath id="botHalf"><rect x="350" y="385.7" width="140" height="70"/></clipPath><filter id="rs" x="-20%" y="-20%" width="140%" height="140%"><feGaussianBlur stdDeviation="2.2"/></filter></defs>
<circle cx="416.3" cy="387.3" r="58" fill="#000" opacity="0.28" filter="url(#rs)"/>
<g clip-path="url(#lens)">
<rect x="365" y="335" width="105" height="105" fill="#8fe8e8"/>
<path d="M442 336 L468 336 L468 392 L459 379 L450.2 357 Z" fill="#d8bfb3" stroke="none" stroke-width="2.56" stroke-linejoin="round" stroke-linecap="round" />
<path d="M426 336 L441 336 L444.3 357 L454.6 379 L463 396 L456 398 L447.2 379 L434.8 357 Z" fill="#dea56e" stroke="none" stroke-width="2.56" stroke-linejoin="round" stroke-linecap="round" />
<path d="M436.2 373 L450.2 393.7 L464 412 L470 440 L434 440 Z" fill="#fff" stroke="none" stroke-width="2.56" stroke-linejoin="round" stroke-linecap="round" />
<path d="M439.3 336.0 C439.4 334.2 441.2 334.2 442.3 336.0 C443.4 337.8 444.7 343.5 446.0 347.0 C447.3 350.5 448.7 353.3 450.2 357.0 C451.7 360.7 453.5 365.3 455.0 369.0 C456.5 372.7 457.7 375.5 459.0 379.0 C460.3 382.5 462.8 387.5 463.0 390.0 C463.2 392.5 461.4 395.8 460.0 394.0 C458.6 392.2 456.4 383.5 454.6 379.0 C452.8 374.5 450.7 370.7 449.0 367.0 C447.3 363.3 445.6 360.3 444.3 357.0 C443.1 353.7 442.3 350.5 441.5 347.0 C440.7 343.5 439.2 337.8 439.3 336.0Z" fill="#1c130e" stroke="none" stroke-width="2.56" stroke-linejoin="round" stroke-linecap="round" />
<path d="M428.0 345.0 C428.3 343.7 431.6 347.7 433.0 350.0 C434.4 352.3 435.2 356.2 436.5 359.0 C437.8 361.8 439.2 363.7 441.0 367.0 C442.8 370.3 445.4 375.7 447.2 379.0 C449.0 382.3 450.4 384.6 452.0 387.0 C453.6 389.4 454.7 391.2 456.5 393.7 C458.3 396.2 462.6 399.9 463.0 402.0 C463.4 404.1 461.1 407.4 459.0 406.0 C456.9 404.6 452.9 397.4 450.2 393.7 C447.5 390.0 445.0 386.4 443.0 384.0 C441.0 381.6 439.6 381.0 438.4 379.0 C437.1 377.0 436.7 375.5 435.5 372.0 C434.3 368.5 432.2 362.5 431.0 358.0 C429.8 353.5 427.7 346.3 428.0 345.0Z" fill="#1c130e" stroke="none" stroke-width="2.56" stroke-linejoin="round" stroke-linecap="round" />
<path d="M417.5 338.0 C418.5 341.2 422.1 350.6 423.7 357.0 C425.3 363.4 426.5 370.0 427.4 376.1 C428.3 382.2 428.9 387.8 429.3 393.7 C429.7 399.6 429.7 404.8 429.6 411.4 C429.5 417.9 429.0 429.4 428.9 433.0 C430.0 432.5 434.4 430.5 435.5 430.0 C435.8 427.9 436.6 422.0 437.0 417.2 C437.4 412.4 437.7 406.7 437.7 401.1 C437.7 395.5 437.4 388.1 437.0 383.5 C436.6 378.9 436.2 377.6 435.5 373.2 C434.8 368.8 433.7 362.9 432.5 357.0 C431.3 351.1 429.2 341.2 428.5 338.0Z" fill="#1c130e" stroke="none" stroke-width="2.56" stroke-linejoin="round" stroke-linecap="round" />
<path d="M390.7 423.6 C391.7 422.2 394.6 417.1 396.6 415.0 C398.6 412.9 401.6 411.8 402.6 411.2 C402.2 412.4 401.6 416.1 400.2 418.7 C398.8 421.3 395.4 425.6 394.5 427.0Z" fill="#1c130e" stroke="none" stroke-width="2.56" stroke-linejoin="round" stroke-linecap="round" />
</g>
<circle cx="415.8" cy="385.8" r="51.7" fill="none" stroke="#8fe8e8" stroke-width="12.6" clip-path="url(#topHalf)"/>
<circle cx="415.8" cy="385.8" r="51.7" fill="none" stroke="#ecc8a0" stroke-width="12.6" clip-path="url(#botHalf)"/>
<circle cx="415.8" cy="385.8" r="45.4" fill="none" stroke="#20302f" stroke-opacity="0.4" stroke-width="0.7"/>
<path d="M415.8 382.8 V388.8 M412.8 385.8 H418.8" stroke="#111" stroke-width="0.7" fill="none" stroke-dasharray="2.2 1.6"/>
</svg>
<div id="topbar"></div>
<div id="strip"></div>
<div id="title">Cyan</div>
<div id="gallery">Gallery</div>
<div id="sidebar"></div>
<div class="slider" style="top:215.7px;height:146px;"></div>
<div class="knob" style="top:303px;"></div>
<div class="slider" style="top:432px;height:145.6px;"></div>
<div class="knob" style="top:432.2px;"></div>
<svg id="icons" width="1024" height="715" viewBox="0 0 1024 715">

<g id="dots" fill="#ececec"><circle cx="505" cy="10.6" r="2.1"/><circle cx="512" cy="10.6" r="2.1"/><circle cx="518.9" cy="10.6" r="2.1"/></g>
<g id="left-tools">
 <circle cx="96" cy="18.6" r="13.7" fill="#eeeeee"/>
 <circle cx="145.6" cy="18.6" r="13.7" fill="#eeeeee"/>
 <circle cx="195.6" cy="18.6" r="13.7" fill="#eeeeee"/>
 <circle cx="245.2" cy="18.6" r="13.7" fill="#eeeeee"/>
 <!-- wrench -->
 <g fill="none" stroke="#5a5a58">
  <path d="M90.1 24.9 L97.6 17.4" stroke-width="2.7" stroke-linecap="round"/>
  <path d="M102.75 16.31 A3.35 3.35 0 1 1 98.69 12.25" stroke-width="3.0" stroke-linecap="butt"/>
 </g>
 <!-- wand -->
 <g stroke="#5a5a58" stroke-linecap="round" fill="none">
  <path d="M142.2 24.9 L147.2 20.0" stroke-width="2.6"/>
  <path d="M148.2 19.0 L151.3 16.0" stroke-width="2.6"/>
  <path d="M142.9 13.6 V17.6 M140.9 15.6 H144.9" stroke-width="0.9"/>
  <path d="M147.8 11.8 V14.4 M146.5 13.1 H149.1" stroke-width="0.8"/>
 </g>
 <!-- selection S -->
 <g stroke="#5a5a58" stroke-linecap="round" fill="none" stroke-width="2.2">
  <path d="M194.3 13.3 Q197.5 12.5 201.4 12.6"/>
  <path d="M193.9 16.9 L196.8 20.8"/>
  <path d="M189.7 24.4 Q193.5 24.6 196.8 23.9"/>
 </g>
 <!-- transform arrow -->
 <g fill="#5a5a58" stroke="#5a5a58">
  <path d="M239.2 24.8 L246.6 17.4" stroke-width="1.9" stroke-linecap="round" fill="none"/>
  <path d="M251.6 12.4 L248.0 22.6 L246.4 17.7 L241.0 16.6 Z" stroke-width="0.8" stroke-linejoin="round"/>
 </g>
</g>
<g id="right-tools">
 <!-- brush -->
 <path d="M775.4 8.0 C772.0 9.6 764.0 18.2 759.9 22.0 L761.8 23.9 C766.2 19.8 774.2 11.6 775.4 8.0 Z" fill="#3a3a38"/>
 <path d="M760.0 23.0 C758.0 22.4 755.6 23.4 754.6 25.6 C753.9 27.2 752.6 28.4 751.0 29.2 C754.6 30.0 759.0 29.0 760.6 26.4 C761.4 25.2 761.2 23.8 760.0 23.0 Z" fill="#3a3a38"/>
 <!-- smudge finger -->
 <path d="M829.0 8.0 L833.8 12.6 L831.6 15.2 C832.6 18.0 832.2 21.0 830.0 23.2 L827.4 25.4 C825.6 26.6 823.6 25.6 824.0 24.6 L828.4 20.2 L826.6 20.4 L816.6 29.2 C814.4 30.8 812.0 28.8 813.2 26.6 L818.6 19.6 C816.0 17.0 816.0 14.0 818.0 12.0 C820.0 10.2 823.0 9.8 826.2 10.4 Z" fill="#3a3a38"/>
 <!-- eraser -->
 <g>
  <path d="M886.6 9.4 L873.0 22.2 C872.0 23.2 872.0 24.2 873.0 25.2 L876.0 28.0 C877.4 29.2 879.6 29.2 881.0 28.0 L894.4 15.6 C895.4 14.6 895.4 13.6 894.4 12.6 L891.2 9.6 C889.8 8.4 887.8 8.4 886.6 9.4 Z" fill="#0a84ff"/>
  <path d="M876.0 19.6 L883.4 26.2" stroke="#e5e5e5" stroke-width="0.9" fill="none"/>
 </g>
 <!-- layers -->
 <rect x="938.6" y="8.2" width="15.2" height="15.8" rx="3" fill="#3a3a38"/>
 <rect x="932.4" y="13.0" width="16.6" height="16.8" rx="3.4" fill="#e5e5e5"/>
 <rect x="933.0" y="13.6" width="15.4" height="15.6" rx="3" fill="#3a3a38"/>
 <!-- colour -->
 <circle cx="1003.3" cy="18.7" r="12.9" fill="#ebc6a0" stroke="#8e8e8e" stroke-width="0.7"/>
</g>
<g id="side-icons" fill="none" stroke-linecap="round" stroke-linejoin="round">
 <rect x="10.6" y="389" width="15" height="15" rx="3.6" stroke="#5a5a58" stroke-width="1.5"/>
 <path d="M14.5 597 H20.4 A3.7 3.7 0 0 1 20.4 604.4 H12.4" stroke="#4a4a48" stroke-width="1.5"/>
 <path d="M10.8 597 L16.2 593.2 V600.8 Z" fill="#4a4a48" stroke="#4a4a48" stroke-width="0.6"/>
 <path d="M21.4 633.4 H15.5 A3.7 3.7 0 0 0 15.5 640.8 H23.5" stroke="#c3c3c3" stroke-width="1.5"/>
 <path d="M25.2 633.4 L19.8 629.6 V637.2 Z" fill="#c3c3c3" stroke="#c3c3c3" stroke-width="0.6"/>
</g>

</svg>
<div id="homebar"></div>
</body>
</html>
